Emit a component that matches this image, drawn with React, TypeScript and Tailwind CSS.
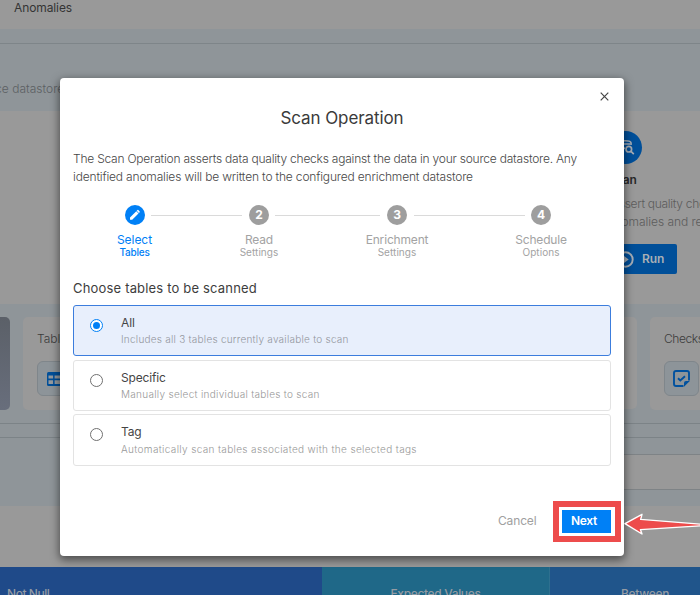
import React from "react";

function Step({ n, title, sub, active }: { n: number; title: string; sub: string; active?: boolean }) {
  return (
    <div className={`flex w-5 flex-col items-center whitespace-nowrap ${active ? "text-[#0080f6]" : "text-[#a3a3a3]"}`}>
      <div className={`flex size-5 items-center justify-center rounded-full text-[12px] font-bold text-white ${active ? "bg-[#0080f6]" : "bg-[#9e9e9e]"}`}>
        {active ? (
          <svg width="12" height="12" viewBox="0 0 12 12" fill="white">
            <path d="M1 8.5 7.3 2.2 9.5 4.4 3.2 10.7H1zM7.7 1.8 8.5 1Q8.9.7 9.3 1L10.7 2.4Q11 2.8 10.7 3.2L9.9 4z" />
          </svg>
        ) : (
          n
        )}
      </div>
      <div className={`mt-[7px] text-[12px] leading-4 ${active ? "-ml-px tracking-[-0.06px]" : "tracking-[-0.17px]"}`}>{title}</div>
      <div className={`-mt-0.5 text-[10px] leading-3 ${active ? "-ml-px font-medium tracking-[-0.2px]" : "tracking-[0.05px]"}`}>{sub}</div>
    </div>
  );
}

function Line({ className }: { className: string }) {
  return <div className={`mt-[10px] h-px bg-[#dadada] ${className}`} />;
}

function Option({ title, sub, subClass, className, active }: { title: string; sub: string; subClass: string; className: string; active?: boolean }) {
  return (
    <div className={`flex rounded-[3px] border pl-4 ${active ? "border-[#3c7ddd] bg-[#e8effc]" : "border-[#e3e3e3] bg-white"} ${className}`}>
      <div className={`mt-[13px] flex size-[13px] shrink-0 items-center justify-center rounded-full border ${active ? "border-[#0080f6] bg-white" : "border-[#707070]"}`}>
        {active && <div className="size-[7px] rounded-full bg-[#0080f6]" />}
      </div>
      <div className="ml-[18px] pt-[9px]">
        <div className="text-[12px] leading-4 tracking-[-0.15px] text-[#454545]">{title}</div>
        <div className={`text-[10px] font-light leading-[15px] ${active ? "text-[#93969c]" : "text-[#979797]"} ${subClass}`}>{sub}</div>
      </div>
    </div>
  );
}

function Backdrop() {
  return (
    <div className="flex h-full w-full flex-col overflow-hidden whitespace-nowrap bg-[#999999] text-[12px]">
      <div className="h-[29px] shrink-0 pl-[14px] leading-[16px] tracking-[-0.1px] text-[#343434]">Anomalies</div>
      <div className="h-[82px] shrink-0 bg-[#8f9599]">
        <div className="h-[15px] border-b border-[#7e8589]" />
        <div className="-ml-[5px] pt-[36px] font-light leading-[18px] tracking-[0.03px] text-[#5c6063]">ce datastore</div>
      </div>
      <div className="h-[193px] shrink-0 pl-[608px] pt-5">
        <div className="ml-px flex size-[33px] items-center justify-center rounded-full bg-[#004f99]">
          <svg width="18" height="18" viewBox="0 0 18 18" fill="none" stroke="#a6adb5" strokeWidth="1.7">
            <path d="M2 4c0-3 12-3 12 0v2M2 4v9c0 1.5 3 2 5 2M2 8c3 1.5 4 1.5 6 1.2M5 5h8" />
            <circle cx="11.8" cy="10.2" r="2.8" />
            <path d="m13.8 12.2 3 3" />
          </svg>
        </div>
        <div className="mt-[7px] font-semibold leading-[18px] tracking-[-0.1px] text-[#292929]">Scan</div>
        <div className="mt-[6px] pl-[3px] font-light leading-[18px] text-[#5c5c5c]">
          <div className="tracking-[-0.3px]">Assert quality checks</div>
          <div className="-ml-[3px] tracking-[-0.05px]">anomalies and record</div>
        </div>
        <div className="mt-[13px] flex h-[30px] w-[69px] items-center rounded-[2px] bg-[#004f99] pl-[9px] font-semibold text-[#a9afb5]">
          <svg width="17" height="17" viewBox="0 0 17 17">
            <circle cx="8.5" cy="8.5" r="7.2" fill="none" stroke="#a6adb5" strokeWidth="1.9" />
            <path d="M7 5v7l4.7-3.5z" fill="#a6adb5" />
          </svg>
          <span className="ml-[8px] tracking-[-0.15px]">Run</span>
        </div>
      </div>
      <div className="h-[202px] shrink-0 bg-[#8f9599]">
        <div className="flex h-[106px] pt-[13px]">
          <div className="h-[93px] w-[10px] shrink-0 rounded-r-[5px] bg-linear-to-b from-[#5b6068] to-[#686e7c]" />
          <div className="ml-[13px] h-[93px] w-[300px] shrink-0 rounded-[5px] bg-[#999999] pl-[14px] pt-[13px]">
            <div className="font-light leading-[18px] text-[#3c3c3c]">Tables</div>
            <div className="mt-[13px] flex size-[35px] items-center rounded-[6px] border border-[#7f868b] bg-[#8d9499] pl-[9px]">
              <svg width="16" height="14" viewBox="0 0 16 14">
                <rect width="16" height="14" rx="1.5" fill="#004f99" />
                <path d="M1.5 3.5h4.6v3H1.5zM7.6 3.5h6.9v3H7.6zM1.5 8.3h4.6v3.6H1.5zM7.6 8.3h6.9v3.6H7.6z" fill="#949a9f" />
              </svg>
            </div>
          </div>
          <div className="ml-[13px] h-[92px] w-[301px] shrink-0 rounded-[5px] bg-[#999999]" />
          <div className="ml-[13px] h-[93px] w-[100px] shrink-0 rounded-[5px] bg-[#999999] pl-[14px] pt-[13px]">
            <div className="font-light leading-[18px] tracking-[-0.4px] text-[#3c3c3c]">Checks</div>
            <div className="mt-[13px] flex size-[35px] items-center justify-center rounded-[6px] border border-[#7f868b] bg-[#8d9499]">
              <svg width="17" height="17" viewBox="0 0 17 17" fill="none" stroke="#00519f" strokeWidth="1.9">
                <path d="M10.5 16H3Q1 16 1 14V3Q1 1 3 1H14Q16 1 16 3V10.5" />
                <path d="m5 8.3 2.3 2.2L12 6.2" />
                <path d="M11 16.8V13Q11 11 13 11H16.8z" fill="#00519f" stroke="none" />
              </svg>
            </div>
          </div>
        </div>
        <div className="pt-[13px]">
          <div className="h-px bg-[#7c8387]" />
        </div>
        <div className="pt-[13px]">
          <div className="h-px bg-[#7c8387]" />
        </div>
        <div className="ml-[300px] mt-4 h-9 border-y border-[#7e8386] bg-[#999999]" />
      </div>
      <div className="h-[61px] shrink-0" />
      <div className="flex h-7 shrink-0 font-medium leading-4 text-[#949ba3]">
        <div className="w-[322px] bg-[#1f4a89] pl-[7px] pt-[19px] tracking-[-0.45px]">Not Null</div>
        <div className="w-[228px] border-r border-[#2e708f] bg-[#1f6888] pt-[19px] text-center tracking-[-0.35px]">Expected Values</div>
        <div className="flex-1 bg-[#20558b] pl-[71px] pt-[19px] tracking-[-0.3px]">Between</div>
      </div>
    </div>
  );
}

export default function App() {
  return (
    <div className="relative h-[595px] w-[700px] overflow-hidden font-['Inter',sans-serif]">
      <Backdrop />
      <div className="absolute left-[60px] top-[78px] h-[478px] w-[564px] rounded-[4px] bg-white px-[13px] shadow-[0_3px_8px_1px_rgba(0,0,0,0.5)]">
        <div className="flex h-7 justify-end pr-[2px] pt-[14px]">
          <svg width="9" height="9" viewBox="0 0 9 9" stroke="#454545" strokeWidth="1.2">
            <path d="m.7.7 7.6 7.6M8.3.7.7 8.3" />
          </svg>
        </div>
        <h1 className="text-center text-[17px] leading-6 tracking-[-0.09px] text-[#3a3a3a]">Scan Operation</h1>
        <div className="mt-5 whitespace-nowrap text-[12px] font-light leading-[18px] text-[#474747]">
          <p className="tracking-[-0.22px]">The Scan Operation asserts data quality checks against the data in your source datastore. Any</p>
          <p className="tracking-[-0.165px]">identified anomalies will be written to the configured enrichment datastore</p>
        </div>
        <div className="mt-[19px] flex h-[74px] pl-[52px]">
          <Step n={1} title="Select" sub="Tables" active />
          <Line className="ml-[6px] mr-[7px] w-[91px]" />
          <Step n={2} title="Read" sub="Settings" />
          <Line className="ml-[6px] mr-[7px] w-[105px]" />
          <Step n={3} title="Enrichment" sub="Settings" />
          <Line className="ml-[7px] mr-[6px] w-[111px]" />
          <Step n={4} title="Schedule" sub="Options" />
        </div>
        <h2 className="text-[13px] leading-[18px] tracking-[0.18px] text-[#3d3d3d]">Choose tables to be scanned</h2>
        <div className="mt-2 w-[538px]">
          <Option title="All" sub="Includes all 3 tables currently available to scan" subClass="mt-px tracking-[0.24px]" className="h-[51px]" active />
          <Option title="Specific" sub="Manually select individual tables to scan" subClass="mt-px tracking-[0.29px]" className="mt-1 h-[51px]" />
          <Option title="Tag" sub="Automatically scan tables associated with the selected tags" subClass="mt-0.5 tracking-[0.35px]" className="mt-[3px] h-[52px]" />
        </div>
        <div className="mt-[35px] flex text-[12px]">
          <span className="ml-[425px] w-[55px] shrink-0 leading-10 tracking-[-0.15px] text-[#a0a0a0]">Cancel</span>
          <div className="flex h-[41px] w-[68px] shrink-0 border-[6px] border-[#ed4c4c] bg-white pl-[3px] pt-[3px]">
            <button className="h-[23px] w-[49px] bg-[#0080f6] pb-px pr-[5px] text-center font-semibold leading-[22px] tracking-[-0.3px] text-white">Next</button>
          </div>
        </div>
      </div>
      <svg className="absolute left-[620px] top-[508px]" width="80" height="32" viewBox="620 508 80 32">
        <path d="M625 523.7 642 514.3 640.7 519.4 702 524.3V525.7L640.4 529.6 642 534 Z" fill="#ed4c4c" stroke="white" strokeWidth="1.4" strokeLinejoin="round" />
      </svg>
    </div>
  );
}
